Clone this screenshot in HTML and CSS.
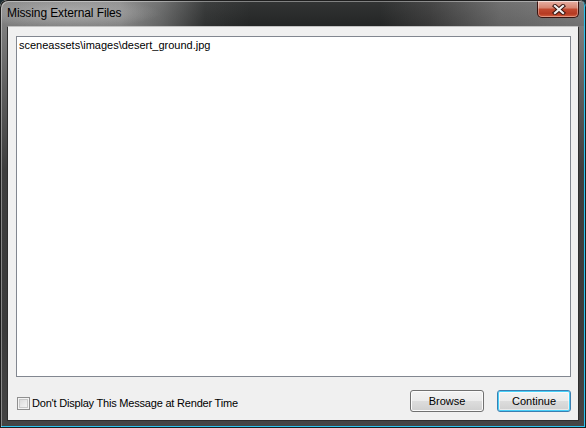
FILE: index.html
```html
<!DOCTYPE html>
<html>
<head>
<meta charset="utf-8">
<title>Missing External Files</title>
<link rel="stylesheet" href="styles.css">
</head>
<body>
<div class="window">
  <div class="titlebar">
    <span class="title">Missing External Files</span>
    <button class="close" aria-label="Close">
      <svg width="14" height="11" viewBox="0 0 14 11">
        <path d="M3 2 L11 9 M11 2 L3 9" stroke="#3a1510" stroke-width="4.2" stroke-linecap="square" fill="none"/>
        <path d="M3 2 L11 9 M11 2 L3 9" stroke="#f0f0f0" stroke-width="2.2" stroke-linecap="square" fill="none"/>
      </svg>
    </button>
  </div>
  <div class="frame">
    <div class="client">
      <div class="listbox">
        <div class="item">sceneassets\images\desert_ground.jpg</div>
      </div>
      <div class="footer">
        <label class="check"><span class="box"></span><span class="label">Don't Display This Message at Render Time</span></label>
        <div class="buttons">
          <button class="btn">Browse</button>
          <button class="btn default">Continue</button>
        </div>
      </div>
    </div>
  </div>
</div>
</body>
</html>
```
FILE: styles.css
```css
* { box-sizing: border-box; }
html, body { margin: 0; padding: 0; }
body {
  width: 586px;
  height: 428px;
  overflow: hidden;
  background: #1c2a30;
  font-family: "Liberation Sans", Arial, sans-serif;
}

.window {
  position: relative;
  width: 586px;
  height: 428px;
  display: flex;
  flex-direction: column;
  border-radius: 7px 7px 0 0;
  overflow: hidden;
  background: linear-gradient(to bottom, #7e7e7e 26px, #5e5e5e 90px, #3e3e3e 170px, #3b3b3b 330px, #454545 428px);
}
.window::after {
  content: "";
  position: absolute;
  inset: 0;
  border-radius: 7px 7px 0 0;
  pointer-events: none;
  box-shadow:
    inset 1px 1px 0 #1e1e1e,
    inset -1px -1px 0 #1e1e1e,
    inset 2px 2px 0 rgba(255,255,255,0.38),
    inset -2px -2px 0 #2cc3ef;
}

.titlebar {
  height: 26px;
  display: flex;
  align-items: flex-start;
  justify-content: space-between;
  padding-left: 7px;
  background:
    radial-gradient(ellipse 95px 15px at 66px 13px, rgba(215,215,215,0.45), rgba(215,215,215,0)),
    linear-gradient(to bottom, rgba(255,255,255,0.06), rgba(0,0,0,0.06)),
    linear-gradient(to right, #858585 0, #8c8c8c 120px, #6a6b6b 160px, #323434 205px, #262828 250px, #262828 380px, #3c3c3c 430px, #686868 500px, #7a7a7a 586px);
}
.title {
  margin-top: 5px;
  font-size: 12px;
  line-height: 16px;
  color: #000;
  letter-spacing: -0.1px;
}

.close {
  width: 42px;
  height: 18px;
  margin-right: 7px;
  padding: 0;
  border: 1px solid #3a1410;
  border-top-color: #5a2a22;
  border-radius: 0 0 5px 5px;
  display: flex;
  align-items: center;
  justify-content: center;
  background: linear-gradient(to bottom, #e7b0a4 0%, #d78672 42%, #c24a30 52%, #b53a22 80%, #d5603f 100%);
  box-shadow: inset 0 0 0 1px rgba(255,255,255,0.35);
}
.close svg { display: block; margin-left: 2px; }

.frame {
  flex: 1;
  display: flex;
  padding: 0 7px 7px 7px;
}

.client {
  flex: 1;
  display: flex;
  flex-direction: column;
  background: #f0f0f0;
  border: 1px solid #2e2e2e;
  border-top-color: #c2c2c2;
}

.listbox {
  margin: 9px 7px 0 8px;
  height: 341px;
  background: #fff;
  border: 1px solid #828790;
}
.item {
  padding: 1px 0 0 2px;
  font-size: 11px;
  line-height: 14px;
  color: #000;
}

.footer {
  display: flex;
  justify-content: space-between;
  align-items: flex-start;
  margin: 13px 7px 0 9px;
}

.check {
  margin-top: 7px;
  display: flex;
  align-items: center;
  gap: 2px;
  font-size: 11px;
  line-height: 13px;
  color: #000;
}
.label { letter-spacing: -0.2px; }
.box {
  width: 13px;
  height: 13px;
  border: 1px solid #8f8f8f;
  background: linear-gradient(135deg, #d4d4d4 0%, #e8e8e8 50%, #f8f8f8 100%);
  box-shadow: inset 0 0 0 1px #f4f4f4, inset 0 0 0 2px #c8c8c8;
}

.buttons {
  display: flex;
  gap: 13px;
}
.btn {
  width: 74px;
  height: 22px;
  padding: 0;
  font-family: "Liberation Sans", Arial, sans-serif;
  font-size: 11px;
  color: #000;
  border: 1px solid #707070;
  border-radius: 3px;
  background: linear-gradient(to bottom, #f2f2f2 0%, #ebebeb 50%, #dddddd 50%, #cfcfcf 100%);
  box-shadow: inset 0 0 0 1px #fbfbfb;
}
.btn.default {
  border-color: #3c7fb1;
  box-shadow: inset 0 0 0 1px #48cff8, inset 0 0 0 2px rgba(255,255,255,0.55);
}
```
